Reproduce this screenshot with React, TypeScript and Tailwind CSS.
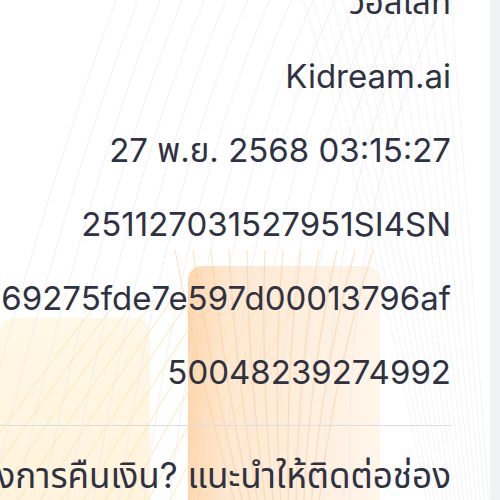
import React from "react"

const rows = [
    "วอลเล็ท",
    "Kidream.ai",
    "27 พ.ย. 2568 03:15:27",
    "251127031527951SI4SN",
    "69275fde7e597d00013796af",
    "50048239274992",
]

const Backdrop = () => {
    const gray = Array.from({ length: 16 }, (_, i) => i)
    const warm = Array.from({ length: 12 }, (_, i) => i)
    return (
        <svg className="absolute inset-0" width="490" height="500" viewBox="0 0 490 500">
            <defs>
                <linearGradient id="og" x1="0" y1="0" x2="1" y2="0">
                    <stop offset="0" stopColor="#fdd6ad" />
                    <stop offset="0.2" stopColor="#fee8d0" />
                    <stop offset="1" stopColor="#fff5ea" />
                </linearGradient>
                <linearGradient id="yg" x1="0" y1="0" x2="0" y2="1">
                    <stop offset="0" stopColor="#fff8e6" />
                    <stop offset="1" stopColor="#fff3dc" />
                </linearGradient>
            </defs>
            <rect x="0" y="318" width="150" height="200" rx="14" fill="url(#yg)" />
            <rect x="188" y="266" width="192" height="260" rx="14" fill="url(#og)" />
            {gray.map(i => (
                <path
                    key={"g" + i}
                    d={`M ${120 + i * 22} -10 Q ${40 + i * 20} 200 ${-40 + i * 26} 520`}
                    fill="none"
                    stroke="#e6e8ec"
                    strokeWidth="1"
                    opacity="0.6"
                />
            ))}
            {gray.map(i => (
                <path
                    key={"h" + i}
                    d={`M ${300 + i * 10} -10 Q ${380 + i * 6} 240 ${430 + i * 4} 520`}
                    fill="none"
                    stroke="#e8eaee"
                    strokeWidth="1"
                    opacity="0.5"
                />
            ))}
            {warm.map(i => (
                <path
                    key={"o" + i}
                    d={`M ${175 + i * 18} 250 Q ${200 + i * 12} 380 ${240 + i * 7} 520`}
                    fill="none"
                    stroke="#fbc892"
                    strokeWidth="1.2"
                    opacity="0.5"
                />
            ))}
            {warm.map(i => (
                <path
                    key={"y" + i}
                    d={`M ${-60 + i * 22} 520 Q ${20 + i * 20} 400 ${100 + i * 18} 300`}
                    fill="none"
                    stroke="#fde6a8"
                    strokeWidth="1.2"
                    opacity="0.7"
                />
            ))}
        </svg>
    )
}

export default function App() {
    return (
        <div className="w-[500px] h-[500px] flex overflow-hidden bg-white" style={{ fontFamily: "Inter, 'Noto Sans', 'Noto Sans Thai', sans-serif" }}>
            <div className="relative w-[490px] h-full overflow-hidden">
                <Backdrop />
                <div className="relative flex flex-col pr-[39px] mt-[-35px] text-[33px] text-[#2f3242]">
                    {rows.map(r => (
                        <div key={r} className="flex justify-end whitespace-nowrap leading-[74px] h-[74px]">
                            {r}
                        </div>
                    ))}
                    <div className="h-px bg-[#dcdde1] mt-[16px]" />
                    <div className="flex justify-end whitespace-nowrap text-[35px] leading-[46px] mt-[26px]">
                        หากต้องการคืนเงิน? แนะนำให้ติดต่อช่อง
                    </div>
                    <div className="flex justify-end whitespace-nowrap text-[35px] leading-[46px]">
                        ทางบริการลูกค้าของร้านค้าโดยตรง
                    </div>
                </div>
            </div>
            <div className="w-[10px] h-full bg-[#f1f2f5]" />
        </div>
    )
}
